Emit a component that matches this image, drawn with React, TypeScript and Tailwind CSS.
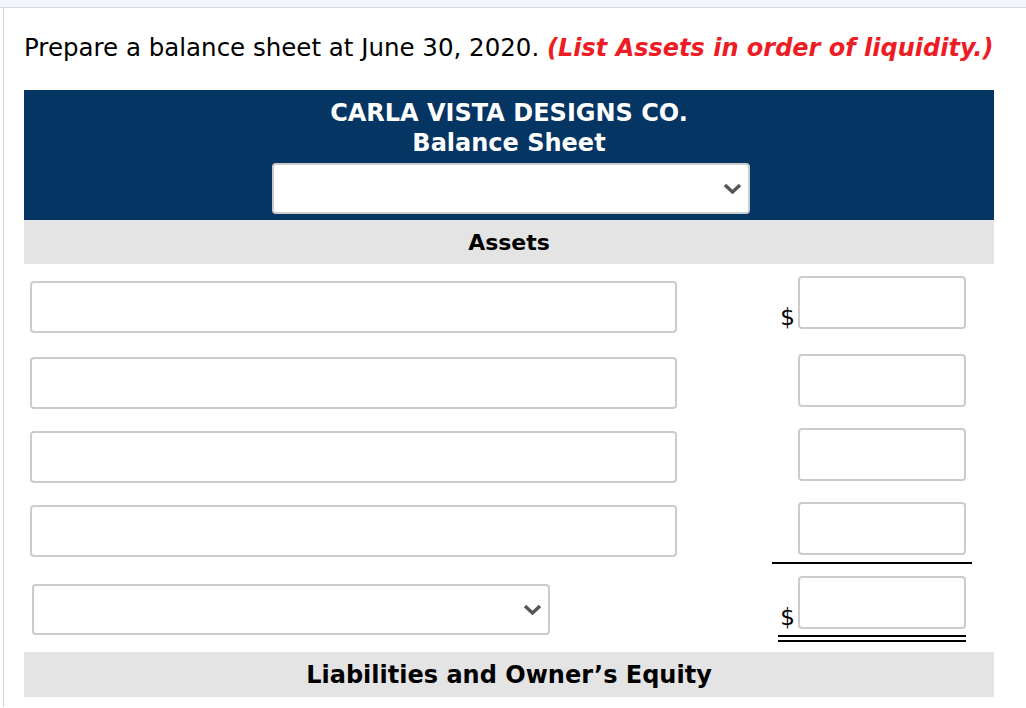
import React from "react";

const font = { fontFamily: '"DejaVu Sans", Verdana, sans-serif' };

const Chevron = () => (
  <svg width="19" height="11" viewBox="0 0 19 11" className="text-[#555555]">
    <path d="M2 2 L9.5 9 L17 2" fill="none" stroke="currentColor" strokeWidth="3.4" strokeLinejoin="miter" />
  </svg>
);

const TextBox = ({ className }: { className: string }) => (
  <div className={`rounded-[4px] border-2 border-[#cccccc] bg-white ${className}`} />
);

const SelectBox = ({ className }: { className: string }) => (
  <div className={`flex items-center justify-end rounded-[4px] border-2 border-[#cccccc] bg-white pr-[6px] ${className}`}>
    <Chevron />
  </div>
);

const Dollar = ({ show }: { show: boolean }) => (
  <span className="mr-[3px] w-[21px] text-right text-[23px] leading-none text-black">
    {show ? "$" : ""}
  </span>
);

export default function App() {
  const rows = [
    { top: "mt-[12px]", left: "mt-[5px]", dollar: true },
    { top: "mt-[21px]", left: "mt-[3px]", dollar: false },
    { top: "mt-[19px]", left: "mt-[3px]", dollar: false },
    { top: "mt-[19px]", left: "mt-[3px]", dollar: false },
  ];

  return (
    <div className="min-h-screen bg-white" style={font}>
      <div className="h-[8px] border-b border-[#d3dce6] bg-[#f3f6f9]" />
      <div className="ml-[3px] min-h-[699px] border-l border-[#cbd5e3] pl-[20px]">
        <p className="pt-[25px] text-[24.5px] leading-[30px] text-black">
          Prepare a balance sheet at June 30, 2020.{" "}
          <span className="text-[24px] font-bold italic text-[#ee1c25]">(List Assets in order of liquidity.)</span>
        </p>

        <div className="mt-[27px] w-[970px]">
          <div className="flex h-[130px] flex-col items-center bg-[#043563] pt-[8px] text-white">
            <div className="text-[24px] font-bold leading-[30px]">CARLA VISTA DESIGNS CO.</div>
            <div className="text-[24px] font-bold leading-[30px]">Balance Sheet</div>
            <SelectBox className="mt-[5px] ml-[3px] h-[51px] w-[478px]" />
          </div>
          <div className="flex h-[44px] items-center justify-center bg-[#e4e4e4] text-[22px] font-bold text-black">
            Assets
          </div>

          {rows.map((r, i) => (
            <div key={i} className={`flex items-start ${r.top}`}>
              <TextBox className={`ml-[6px] h-[52px] w-[647px] ${r.left}`} />
              <div className="ml-[97px] flex items-end">
                <Dollar show={r.dollar} />
                <TextBox className="h-[53px] w-[168px]" />
              </div>
            </div>
          ))}

          <div className="ml-[748px] mt-[5px] h-[2px] w-[200px] bg-black" />

          <div className="mt-[12px] flex items-start">
            <SelectBox className="ml-[8px] mt-[8px] h-[51px] w-[518px]" />
            <div className="ml-[224px] flex flex-col">
              <div className="flex items-end">
                <Dollar show />
                <TextBox className="h-[53px] w-[168px]" />
              </div>
              <div className="ml-[4px] mt-[6px] h-[7px] w-[188px] border-y-2 border-black" />
            </div>
          </div>

          <div className="mt-[10px] flex h-[45px] items-center justify-center bg-[#e4e4e4] text-[24px] font-bold text-black">
            Liabilities and Owner’s Equity
          </div>
        </div>
      </div>
    </div>
  );
}
